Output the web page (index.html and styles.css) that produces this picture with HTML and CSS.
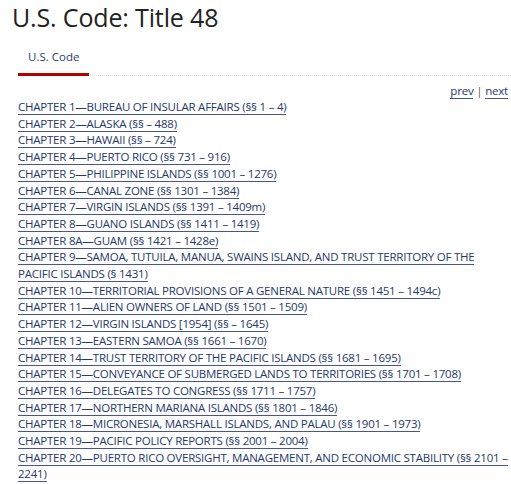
FILE: index.html
```html
<!DOCTYPE html>
<html lang="en">
<head>
  <meta charset="UTF-8" />
  <title>U.S. Code: Title 48</title>
  <link rel="stylesheet" href="styles.css">
</head>
<body>
  <h1 class="title">U.S. Code: Title 48</h1>

  <div class="tabs">
    <a class="tab active" href="#">U.S. Code</a>
  </div>

  <div class="content">
    <div class="pager">
      <a href="#">prev</a> | <a href="#">next</a>
    </div>
    <ol class="toc">
      <li><a href="#">CHAPTER 1—BUREAU OF INSULAR AFFAIRS (§§ 1 – 4)</a></li>
      <li><a href="#">CHAPTER 2—ALASKA (§§ – 488)</a></li>
      <li><a href="#">CHAPTER 3—HAWAII (§§ – 724)</a></li>
      <li><a href="#">CHAPTER 4—PUERTO RICO (§§ 731 – 916)</a></li>
      <li><a href="#">CHAPTER 5—PHILIPPINE ISLANDS (§§ 1001 – 1276)</a></li>
      <li><a href="#">CHAPTER 6—CANAL ZONE (§§ 1301 – 1384)</a></li>
      <li><a href="#">CHAPTER 7—VIRGIN ISLANDS (§§ 1391 – 1409m)</a></li>
      <li><a href="#">CHAPTER 8—GUANO ISLANDS (§§ 1411 – 1419)</a></li>
      <li><a href="#">CHAPTER 8A—GUAM (§§ 1421 – 1428e)</a></li>
      <li><a href="#">CHAPTER 9—SAMOA, TUTUILA, MANUA, SWAINS ISLAND, AND TRUST TERRITORY OF THE PACIFIC ISLANDS (§ 1431)</a></li>
      <li><a href="#">CHAPTER 10—TERRITORIAL PROVISIONS OF A GENERAL NATURE (§§ 1451 – 1494c)</a></li>
      <li><a href="#">CHAPTER 11—ALIEN OWNERS OF LAND (§§ 1501 – 1509)</a></li>
      <li><a href="#">CHAPTER 12—VIRGIN ISLANDS [1954] (§§ – 1645)</a></li>
      <li><a href="#">CHAPTER 13—EASTERN SAMOA (§§ 1661 – 1670)</a></li>
      <li><a href="#">CHAPTER 14—TRUST TERRITORY OF THE PACIFIC ISLANDS (§§ 1681 – 1695)</a></li>
      <li><a href="#">CHAPTER 15—CONVEYANCE OF SUBMERGED LANDS TO TERRITORIES (§§ 1701 – 1708)</a></li>
      <li><a href="#">CHAPTER 16—DELEGATES TO CONGRESS (§§ 1711 – 1757)</a></li>
      <li><a href="#">CHAPTER 17—NORTHERN MARIANA ISLANDS (§§ 1801 – 1846)</a></li>
      <li><a href="#">CHAPTER 18—MICRONESIA, MARSHALL ISLANDS, AND PALAU (§§ 1901 – 1973)</a></li>
      <li><a href="#">CHAPTER 19—PACIFIC POLICY REPORTS (§§ 2001 – 2004)</a></li>
      <li><a href="#">CHAPTER 20—PUERTO RICO OVERSIGHT, MANAGEMENT, AND ECONOMIC STABILITY (§§ 2101 – 2241)</a></li>
    </ol>
  </div>
</body>
</html>
```

FILE: styles.css
```css
* {
  box-sizing: border-box;
  font-family: "Open Sans", Arial, sans-serif;
}
body {
  margin: 0;
  padding: 0 0 0 12px;
  background: #fff;
  color: #333;
}
.title {
  margin: 0;
  font-size: 25px;
  font-weight: 400;
  letter-spacing: -0.15px;
  line-height: 34px;
  color: #222;
}
.tabs {
  display: flex;
  margin: 10px 0 0 6px;
  border-bottom: 1px dotted #ddd;
}
.tab {
  display: block;
  padding: 4px 10px 7px;
  font-size: 11.5px;
  line-height: 18px;
  color: #2c3e6b;
  text-decoration: none;
  border-bottom: 3px solid #b30000;
  margin-bottom: -1px;
}
.content {
  padding: 6px 3px 0 6px;
}
.pager {
  text-align: right;
  font-size: 11.5px;
  letter-spacing: -0.2px;
  line-height: 17px;
  color: #555;
}
.pager a,
.toc a {
  color: #26386a;
  text-decoration: none;
  border-bottom: 1px solid #46549a;
}
.toc {
  list-style: none;
  margin: 0;
  padding: 0;
  font-size: 11.5px;
  letter-spacing: -0.23px;
  line-height: 16.7px;
}
```
